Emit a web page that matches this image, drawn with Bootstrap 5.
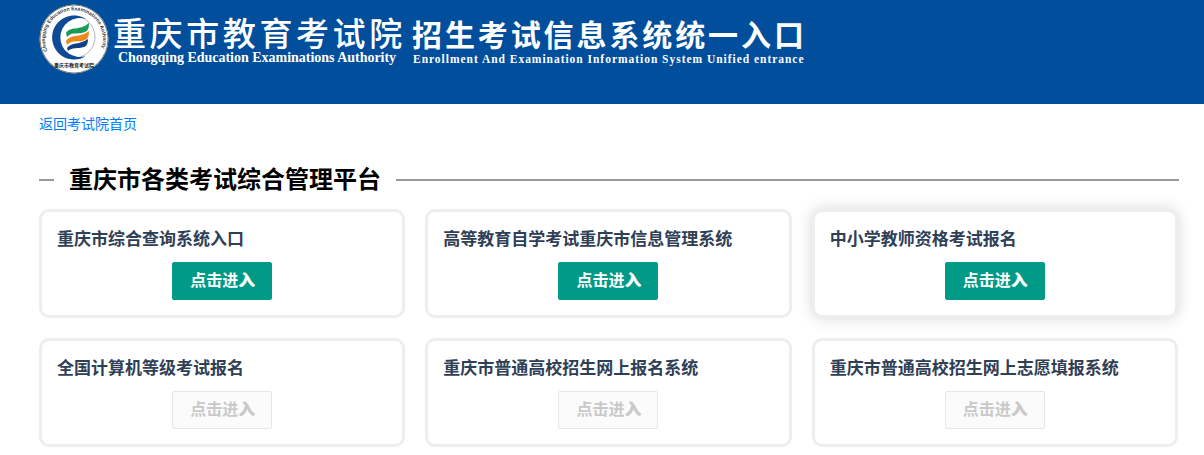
<!DOCTYPE html>
<html lang="zh-CN">
<head>
  <meta charset="UTF-8">
  <title>重庆市教育考试院 招生考试信息系统统一入口</title>
  <link href="https://cdn.jsdelivr.net/npm/bootstrap@5.3.0/dist/css/bootstrap.min.css" rel="stylesheet">
  <style>
    body {
      background-color: #fff;
      font-family: "Liberation Sans", "Noto Sans CJK SC", sans-serif;
    }
    .site-head {
      height: 104px;
      background-color: #004e9c;
      padding: 4px 0 0 39px;
      color: #fff;
    }
    .head-logo {
      width: 70px;
      height: 70px;
      margin-right: 4px;
    }
    .head-org {
      width: 289px;
      margin-right: 10px;
    }
    .org-cn {
      font-family: "Noto Sans CJK SC", sans-serif;
      font-weight: 500;
      font-size: 33px;
      letter-spacing: 3.6px;
      line-height: 38px;
      height: 38px;
      margin-top: 9px;
      white-space: nowrap;
    }
    .org-en {
      font-family: "Liberation Serif", serif;
      font-weight: 700;
      font-size: 14px;
      letter-spacing: -.02px;
      line-height: 16px;
      margin-left: 5px;
      margin-top: -1px;
      white-space: nowrap;
    }
    .sys-cn {
      font-family: "Noto Sans CJK SC", sans-serif;
      font-weight: 700;
      font-size: 30px;
      letter-spacing: 2.9px;
      line-height: 38px;
      height: 38px;
      margin-top: 10px;
      white-space: nowrap;
    }
    .sys-en {
      font-family: "Liberation Serif", serif;
      font-weight: 700;
      font-size: 11.5px;
      letter-spacing: .97px;
      line-height: 14px;
      margin-left: 1px;
      white-space: nowrap;
    }
    .page-body {
      padding: 0 26px 0 39px;
    }
    .back-link {
      display: block;
      font-size: 14px;
      line-height: 20px;
      padding-top: 10px;
      color: #007bff;
      text-decoration: none;
    }
    .plat-title {
      height: 30px;
      margin: 31px -1px 14px 0;
      gap: 15px;
    }
    .plat-title::before,
    .plat-title::after {
      content: "";
      height: 2px;
      background-color: #999;
    }
    .plat-title::before {
      width: 15px;
    }
    .plat-title::after {
      flex: 1;
    }
    .plat-title h2 {
      font-size: 24px;
      font-weight: 700;
      line-height: 30px;
      margin: 0;
      color: #000;
    }
    .sys-row {
      --bs-gutter-x: 20px;
      --bs-gutter-y: 20px;
    }
    .sys-card {
      height: 109px;
      border: 3px solid #eee;
      border-radius: 10px;
      padding: 16px 15px 0;
      background-color: #fff;
    }
    .sys-card.is-hover {
      box-shadow: 0 0 15px rgba(0, 0, 0, .16);
    }
    .sys-card h3 {
      font-size: 17px;
      font-weight: 700;
      line-height: 24px;
      margin: 0 0 10px;
      color: #2f4056;
    }
    .enter-btn {
      display: block;
      width: 100px;
      height: 38px;
      margin: 0 auto;
      padding: 0;
      font-size: 16px;
      font-weight: 700;
      line-height: 36px;
      border-radius: 2px;
      color: #fff;
      background-color: #009a87;
      border: 1px solid #009a87;
    }
    .enter-btn span {
      text-shadow: 1px 0 0 currentColor;
    }
    .enter-btn:disabled {
      opacity: 1;
      color: #c9c9c9;
      background-color: #fbfbfb;
      border-color: #e6e6e6;
    }
  </style>
</head>
<body>
  <header class="site-head d-flex align-items-start">
    <svg class="head-logo flex-shrink-0" viewBox="0 0 70 70" aria-hidden="true">
      <defs>
        <path id="ringTop" d="M8.5 47 A29 29 0 1 1 61.5 47"/>
      </defs>
      <circle cx="35" cy="35" r="34.5" fill="#fff"/>
      <circle cx="35" cy="35" r="34" fill="none" stroke="#444" stroke-width=".7"/>
      <text font-family="Liberation Sans, sans-serif" font-size="5" font-weight="700" fill="#333"><textPath href="#ringTop" textLength="112">Chongqing Education Examinations Authority</textPath></text>
      <text font-family="Noto Sans CJK SC, sans-serif" font-size="5" font-weight="700" fill="#222" text-anchor="middle" transform="translate(35 63)">重庆市教育考试院</text>
      <circle cx="35" cy="33" r="21" fill="none" stroke="#9aa3b0" stroke-width=".8"/>
      <path d="M47 15 A22 22 0 1 0 47 52 A19.5 19.5 0 1 1 47 15 Z" fill="#0f4a96"/>
      <path d="M27 29 C31 22 41 27 50 19 C50 24 49 27 46 28 C40 31 33 27 28 33 Z" fill="#1e9a58"/>
      <path d="M27 37 C31 30 41 34 50 27 C50 32 49 35 46 36 C40 39 33 35 28 41 Z" fill="#ee8a1c"/>
      <path d="M28 44 C32 38 41 41 49 35 C49 39 48 42 45 43 C39 45 33 43 29 47 Z" fill="#123f86"/>
    </svg>
    <div class="head-org flex-shrink-0">
      <div class="org-cn">重庆市教育考试院</div>
      <div class="org-en">Chongqing Education Examinations Authority</div>
    </div>
    <div>
      <div class="sys-cn">招生考试信息系统统一入口</div>
      <div class="sys-en">Enrollment And Examination Information System Unified entrance</div>
    </div>
  </header>

  <main class="page-body">
    <a class="back-link" href="#">返回考试院首页</a>

    <div class="plat-title d-flex align-items-center">
      <h2>重庆市各类考试综合管理平台</h2>
    </div>

    <div class="row sys-row">
      <div class="col-4">
        <div class="sys-card">
          <h3>重庆市综合查询系统入口</h3>
          <button class="btn enter-btn" type="button">点击进<span>入</span></button>
        </div>
      </div>
      <div class="col-4">
        <div class="sys-card">
          <h3>高等教育自学考试重庆市信息管理系统</h3>
          <button class="btn enter-btn" type="button">点击进<span>入</span></button>
        </div>
      </div>
      <div class="col-4">
        <div class="sys-card is-hover">
          <h3>中小学教师资格考试报名</h3>
          <button class="btn enter-btn" type="button">点击进<span>入</span></button>
        </div>
      </div>
      <div class="col-4">
        <div class="sys-card">
          <h3>全国计算机等级考试报名</h3>
          <button class="btn enter-btn" type="button" disabled>点击进<span>入</span></button>
        </div>
      </div>
      <div class="col-4">
        <div class="sys-card">
          <h3>重庆市普通高校招生网上报名系统</h3>
          <button class="btn enter-btn" type="button" disabled>点击进<span>入</span></button>
        </div>
      </div>
      <div class="col-4">
        <div class="sys-card">
          <h3>重庆市普通高校招生网上志愿填报系统</h3>
          <button class="btn enter-btn" type="button" disabled>点击进<span>入</span></button>
        </div>
      </div>
    </div>
  </main>

  <script src="https://cdn.jsdelivr.net/npm/bootstrap@5.3.0/dist/js/bootstrap.bundle.min.js"></script>
</body>
</html>
